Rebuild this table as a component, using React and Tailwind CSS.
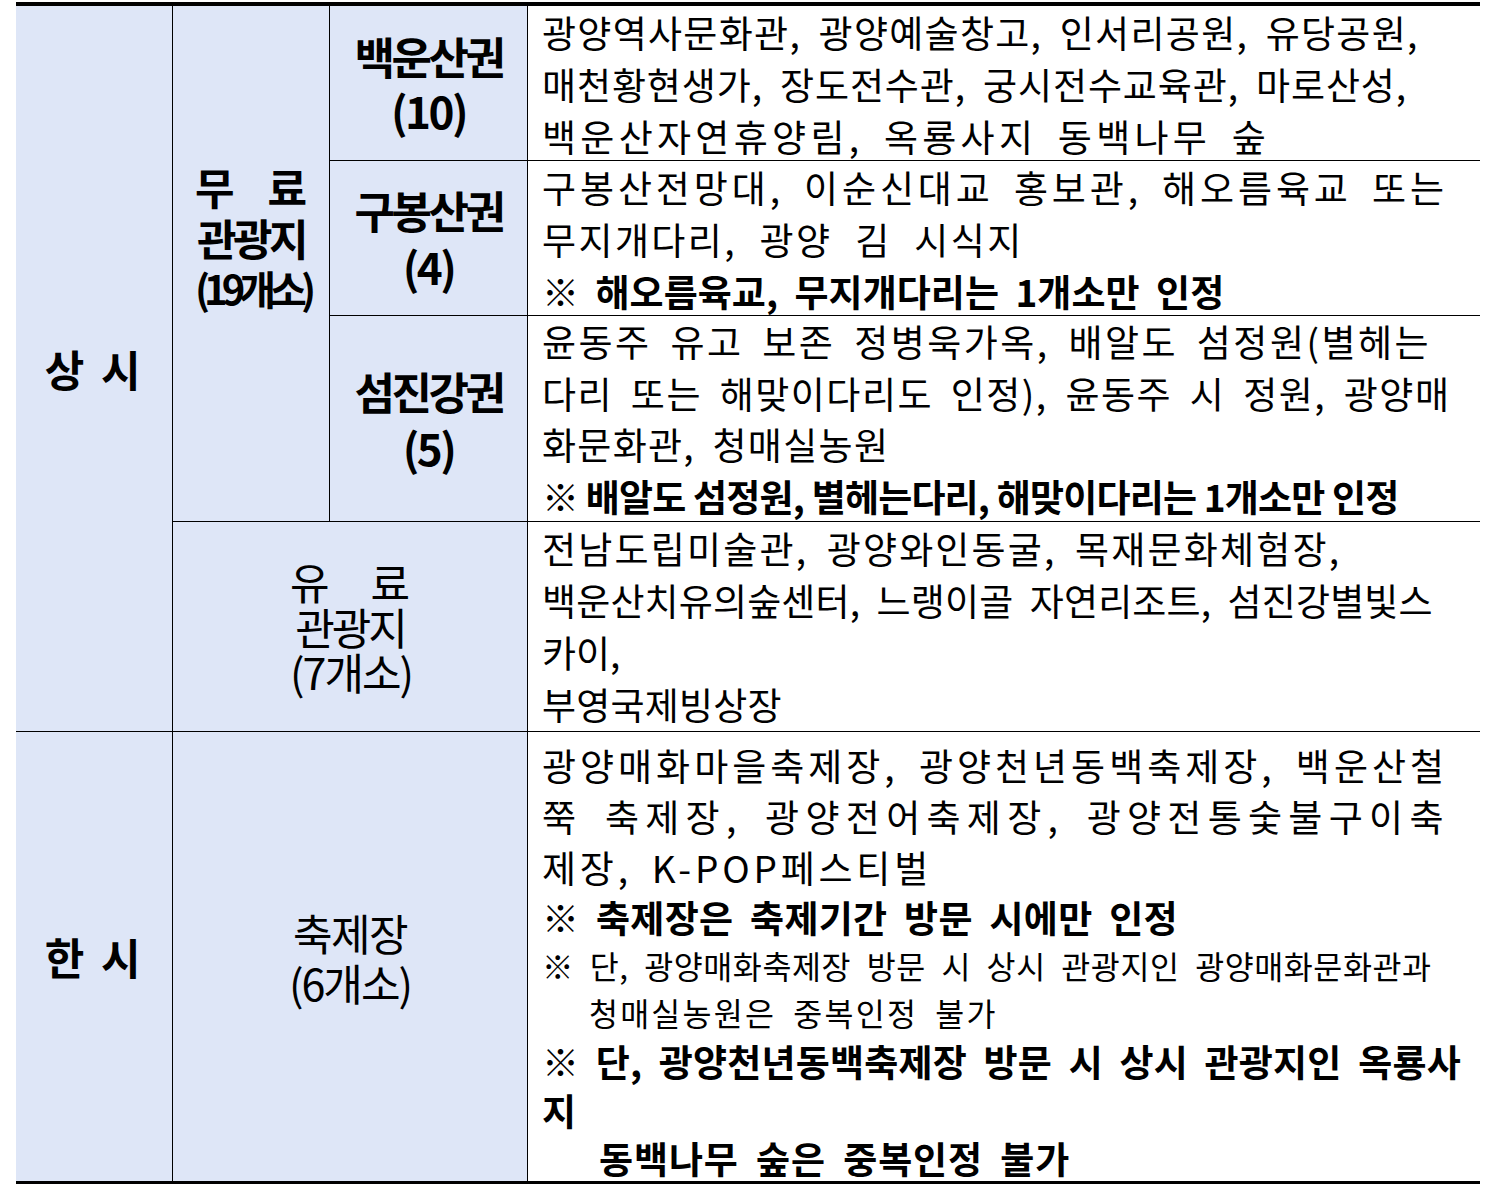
export default function App() {
  return (
    <div className="bg-white w-[1494px] h-[1184px] overflow-hidden pt-[2px] pl-[16px] font-['Noto_Sans_CJK_KR',sans-serif] text-black">
      <div className="grid w-[1464px] grid-cols-[156px_157px_198px_953px] grid-rows-[154px_155px_206px_210px_450px] border-t-[4px] border-b-[3px] border-black">
        {/* 상시 */}
        <div className="col-start-1 row-start-1 row-span-4 bg-[#dee6f7] flex items-center justify-center pr-[6px]">
          <span className="text-[43px] font-bold tracking-[-3.5px] [word-spacing:14px] leading-none whitespace-nowrap">상 시</span>
        </div>

        {/* 무료 관광지 */}
        <div className="col-start-2 row-start-1 row-span-3 border-l border-black bg-[#dee6f7] flex items-center justify-center pb-[52px]">
          <div className="flex flex-col w-[112px] font-bold leading-[51px]">
            <div className="flex justify-between text-[43px]"><span>무</span><span>료</span></div>
            <div className="text-[43px] tracking-[-3.5px] text-center whitespace-nowrap">관광지</div>
            <div className="text-[40px] tracking-[-6px] text-center whitespace-nowrap">(19개소)</div>
          </div>
        </div>

        {/* 백운산권 */}
        <div className="col-start-3 row-start-1 border-l border-black bg-[#dee6f7] flex flex-col items-center justify-center font-bold leading-[54px]">
          <div className="text-[44px] tracking-[-3.5px] whitespace-nowrap">백운산권</div>
          <div className="text-[44px] tracking-[-2.5px]">(10)</div>
        </div>
        <div className="col-start-4 row-start-1 border-l border-black bg-white pl-[14px] text-[37px] leading-[52px]">
          <div className="whitespace-nowrap tracking-[1.3px] [word-spacing:8px]">광양역사문화관, 광양예술창고, 인서리공원, 유당공원,</div>
          <div className="whitespace-nowrap tracking-[0.9px] [word-spacing:8px]">매천황현생가, 장도전수관, 궁시전수교육관, 마로산성,</div>
          <div className="whitespace-nowrap tracking-[4.3px] [word-spacing:8px]">백운산자연휴양림, 옥룡사지 동백나무 숲</div>
        </div>

        {/* 구봉산권 */}
        <div className="col-start-3 row-start-2 border-l border-t border-black bg-[#dee6f7] flex flex-col items-center justify-center font-bold leading-[56px]">
          <div className="text-[44px] tracking-[-3.5px] whitespace-nowrap">구봉산권</div>
          <div className="text-[44px] tracking-[-2.5px]">(4)</div>
        </div>
        <div className="col-start-4 row-start-2 border-l border-t border-black bg-white pl-[14px] text-[37px] leading-[52px]">
          <div className="whitespace-nowrap tracking-[3.9px] [word-spacing:8px]">구봉산전망대, 이순신대교 홍보관, 해오름육교 또는</div>
          <div className="whitespace-nowrap tracking-[2.4px] [word-spacing:12px]">무지개다리, 광양 김 시식지</div>
          <div className="whitespace-nowrap font-bold tracking-[0.05px] [word-spacing:8px]">※ 해오름육교, 무지개다리는 1개소만 인정</div>
        </div>

        {/* 섬진강권 */}
        <div className="col-start-3 row-start-3 border-l border-t border-black bg-[#dee6f7] flex flex-col items-center justify-center font-bold leading-[56px]">
          <div className="text-[44px] tracking-[-3.5px] whitespace-nowrap">섬진강권</div>
          <div className="text-[44px] tracking-[-2.5px]">(5)</div>
        </div>
        <div className="col-start-4 row-start-3 border-l border-t border-black bg-white pl-[14px] text-[37px] leading-[51.5px]">
          <div className="whitespace-nowrap tracking-[2.5px] [word-spacing:8px]">윤동주 유고 보존 정병욱가옥, 배알도 섬정원(별헤는</div>
          <div className="whitespace-nowrap tracking-[1.5px] [word-spacing:8px]">다리 또는 해맞이다리도 인정), 윤동주 시 정원, 광양매</div>
          <div className="whitespace-nowrap tracking-[1.3px] [word-spacing:8px]">화문화관, 청매실농원</div>
          <div className="whitespace-nowrap font-bold tracking-[-0.8px]">※ 배알도 섬정원, 별헤는다리, 해맞이다리는 1개소만 인정</div>
        </div>

        {/* 유료 관광지 */}
        <div className="col-start-2 col-span-2 row-start-4 border-l border-t border-black bg-[#dee6f7] flex items-center justify-center">
          <div className="flex flex-col w-[120px] leading-[45px]">
            <div className="flex justify-between text-[43px]"><span>유</span><span>료</span></div>
            <div className="text-[43px] tracking-[-3px] text-center whitespace-nowrap">관광지</div>
            <div className="text-[43px] tracking-[-2px] text-center whitespace-nowrap">(7개소)</div>
          </div>
        </div>
        <div className="col-start-4 row-start-4 border-l border-t border-black bg-white pl-[14px] text-[37px] leading-[52px]">
          <div className="whitespace-nowrap tracking-[2.2px] [word-spacing:8px]">전남도립미술관, 광양와인동굴, 목재문화체험장,</div>
          <div className="whitespace-nowrap tracking-[0.15px] [word-spacing:8px]">백운산치유의숲센터, 느랭이골 자연리조트, 섬진강별빛스</div>
          <div className="whitespace-nowrap">카이,</div>
          <div className="whitespace-nowrap tracking-[0.2px]">부영국제빙상장</div>
        </div>

        {/* 한시 */}
        <div className="col-start-1 row-start-5 border-t border-black bg-[#dee6f7] flex items-center justify-center pr-[6px]">
          <span className="text-[43px] font-bold tracking-[-3.5px] [word-spacing:14px] leading-none whitespace-nowrap">한 시</span>
        </div>
        <div className="col-start-2 col-span-2 row-start-5 border-l border-t border-black bg-[#dee6f7] flex flex-col items-center justify-center leading-[50px]">
          <div className="text-[43px] tracking-[-1.5px] whitespace-nowrap">축제장</div>
          <div className="text-[43px] tracking-[-2px] whitespace-nowrap">(6개소)</div>
        </div>
        <div className="col-start-4 row-start-5 border-l border-t border-black bg-white pl-[14px] pt-[8px] text-[37px]">
          <div className="whitespace-nowrap leading-[51px] tracking-[4px] [word-spacing:8px]">광양매화마을축제장, 광양천년동백축제장, 백운산철</div>
          <div className="whitespace-nowrap leading-[51px] tracking-[6.3px] [word-spacing:8px]">쭉 축제장, 광양전어축제장, 광양전통숯불구이축</div>
          <div className="whitespace-nowrap leading-[50px] tracking-[3.8px] [word-spacing:8px]">제장, K-POP페스티벌</div>
          <div className="whitespace-nowrap leading-[50px] font-bold tracking-[0.3px] [word-spacing:8px]">※ 축제장은 축제기간 방문 시에만 인정</div>
          <div className="whitespace-nowrap leading-[47px] text-[31.5px] tracking-[0.57px] [word-spacing:8px]">※ 단, 광양매화축제장 방문 시 상시 관광지인 광양매화문화관과</div>
          <div className="whitespace-nowrap leading-[47px] text-[31.5px] pl-[47px] tracking-[2.2px] [word-spacing:8px]">청매실농원은 중복인정 불가</div>
          <div className="whitespace-nowrap leading-[50px] font-bold tracking-[0.2px] [word-spacing:8px]">※ 단, 광양천년동백축제장 방문 시 상시 관광지인 옥룡사</div>
          <div className="whitespace-nowrap leading-[49px] font-bold">지</div>
          <div className="whitespace-nowrap leading-[46px] font-bold pl-[57px] tracking-[0.9px] [word-spacing:8px]">동백나무 숲은 중복인정 불가</div>
        </div>
      </div>
    </div>
  );
}
